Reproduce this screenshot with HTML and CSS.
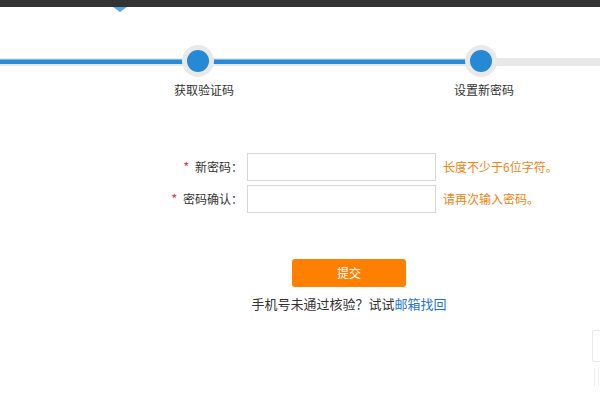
FILE: index.html
```html
<!DOCTYPE html>
<html lang="zh-CN">
<head>
<meta charset="utf-8">
<title>设置新密码</title>
<link rel="stylesheet" href="styles.css">
</head>
<body>
<div class="topbar"><span class="pointer"></span></div>

<div class="steps">
  <div class="step">
    <span class="dot"></span>
    <span class="step-label first">获取验证码</span>
  </div>
  <div class="step">
    <span class="dot"></span>
    <span class="step-label second">设置新密码</span>
  </div>
</div>

<form class="form">
  <label class="label" for="pwd"><span class="req">*</span> 新密码：</label>
  <input class="field" id="pwd" type="password">
  <span class="hint">长度不少于6位字符。</span>

  <label class="label" for="pwd2"><span class="req">*</span> 密码确认：</label>
  <input class="field" id="pwd2" type="password">
  <span class="hint">请再次输入密码。</span>
</form>

<div class="actions">
  <button class="submit" type="button">提交</button>
  <p class="alt">手机号未通过核验？试试<a class="link" href="#">邮箱找回</a></p>
</div>

<div class="side-widget"><span class="side-box"></span><span class="side-mark"></span></div>
</body>
</html>
```

FILE: styles.css
```css
html, body {
  margin: 0;
  padding: 0;
  background: #fff;
}
body {
  width: 600px;
  height: 400px;
  overflow: hidden;
  position: relative;
  font-family: "Noto Sans CJK SC", "Noto Sans", sans-serif;
  color: #333;
}

.topbar {
  height: 7px;
  background: #333;
  position: relative;
}
.pointer {
  position: absolute;
  left: 113px;
  top: 7px;
  width: 0;
  height: 0;
  border-left: 7px solid transparent;
  border-right: 7px solid transparent;
  border-top: 5px solid #52ace4;
}

.steps {
  margin-top: 38px;
  display: flex;
  gap: 251px;
  padding-left: 182px;
  background:
    linear-gradient(#7bbbe9, #7bbbe9) 0 14px / 481px 1px no-repeat,
    linear-gradient(#2a8ad6, #2a8ad6) 0 15px / 481px 4px no-repeat,
    linear-gradient(#e8e8e8, #e8e8e8) 0 13px / 100% 8px no-repeat;
}
.step {
  width: 32px;
  display: flex;
  flex-direction: column;
  align-items: center;
}
.dot {
  width: 32px;
  height: 32px;
  border-radius: 50%;
  background: #e9e9e9;
  display: flex;
  align-items: center;
  justify-content: center;
}
.dot::before {
  content: "";
  width: 22px;
  height: 22px;
  border-radius: 50%;
  background: #2589d6;
}
.step-label {
  margin-top: 5px;
  white-space: nowrap;
  font-size: 12px;
  line-height: 16px;
  color: #333;
}
.step-label.first { margin-left: 12px; }
.step-label.second { margin-left: 6px; }

.form {
  margin: 55px 0 0 160px;
  display: grid;
  grid-template-columns: 87px 189px auto;
  row-gap: 4px;
  align-items: center;
}
.label {
  text-align: right;
  padding-right: 4px;
  font-size: 12px;
  line-height: 16px;
  color: #333;
  white-space: nowrap;
}
.req {
  color: #e4393c;
  font-size: 13px;
  margin-right: 3px;
}
.field {
  box-sizing: border-box;
  width: 189px;
  height: 28px;
  margin: 0;
  border: 1px solid #d6d6d6;
  background: #fff;
  padding: 0 6px;
}
.hint {
  padding-left: 7px;
  font-size: 12px;
  line-height: 16px;
  color: #ee8410;
  white-space: nowrap;
}

.actions {
  margin: 46px 0 0 252px;
  width: 194px;
  display: flex;
  flex-direction: column;
  align-items: center;
}
.submit {
  width: 114px;
  height: 28px;
  border: 0;
  border-radius: 3px;
  background: #ff8000;
  color: #fff;
  font-family: inherit;
  font-size: 12px;
  line-height: 16px;
  padding: 0;
}
.alt {
  margin: 8px 0 0;
  white-space: nowrap;
  font-size: 13px;
  line-height: 17px;
  color: #333;
}
.link {
  color: #1f74d1;
  text-decoration: none;
}

.side-widget {
  position: absolute;
  left: 592px;
  top: 330px;
  width: 20px;
  display: flex;
  flex-direction: column;
  gap: 6px;
}
.side-box {
  height: 30px;
  border: 1px solid #e8e8e8;
  border-radius: 2px;
}
.side-mark {
  margin-left: 2px;
  width: 3px;
  height: 18px;
  border-left: 1px solid #eeeeee;
  border-right: 1px solid #f2f2f2;
}
```
